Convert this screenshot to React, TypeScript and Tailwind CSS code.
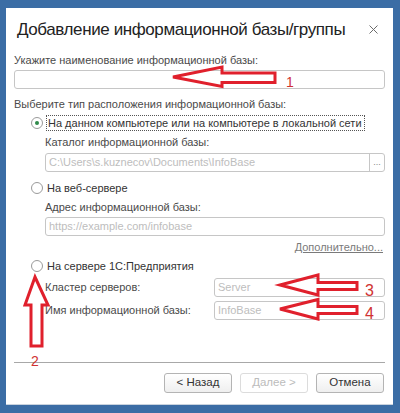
import React from "react";

const font = { fontFamily: '"Liberation Sans", Arial, sans-serif' };

function Radio({ checked }: { checked?: boolean }) {
  return (
    <span className="w-[12px] h-[12px] rounded-full border border-[#9a9a9a] bg-white flex items-center justify-center shrink-0">
      {checked && <span className="w-[4px] h-[4px] rounded-full bg-[#2f8a4a]" />}
    </span>
  );
}

export default function App() {
  return (
    <div className="relative w-[400px] h-[413px] bg-[#3b6da5] overflow-hidden" style={font}>
      <div className="relative ml-[6px] pt-[8px]">
        <div className="w-[387px] h-[397px] bg-white flex flex-col border-b border-[#c9d3de]">
          {/* Title */}
          <div className="h-[42px] flex items-center justify-between pl-[11px] pr-[15px]">
            <span className="text-[17px] text-[#222] leading-none tracking-[-0.4px] whitespace-nowrap">
              Добавление информационной базы/группы
            </span>
            <svg width="9" height="9" viewBox="0 0 9 9">
              <path d="M0.5 0.5 L8.5 8.5 M8.5 0.5 L0.5 8.5" stroke="#6b6b6b" strokeWidth="1" />
            </svg>
          </div>
          <div className="flex flex-col px-[8px] flex-1 text-[11px] text-[#4a4a4a] whitespace-nowrap">
            <div className="mt-[2px] h-[16px] flex items-center">Укажите наименование информационной базы:</div>
            <div className="mt-[2px] h-[19px] border border-[#c6c6c6] rounded-[3px]" />
            <div className="mt-[7px] h-[16px] flex items-center">Выберите тип расположения информационной базы:</div>
            <div className="mt-[3px] h-[16px] flex items-center pl-[17px]">
              <Radio checked />
              <span className="ml-[3px] h-[16px] flex items-center border border-dotted border-[#555] pl-[1px] pr-[2px] text-[#333]">
                На данном компьютере или на компьютере в локальной сети
              </span>
            </div>
            <div className="mt-[3px] h-[16px] flex items-center pl-[31px]">Каталог информационной базы:</div>
            <div className="mt-[3px] ml-[31px] h-[19px] flex border border-[#c6c6c6] rounded-[3px]">
              <div className="flex-1 flex items-center pl-[3px] text-[#bdbdbd]">C:\Users\s.kuznecov\Documents\InfoBase</div>
              <div className="w-[15px] border-l border-[#c6c6c6] flex items-end justify-center pb-[4px] text-[9px] leading-none text-[#888]">...</div>
            </div>
            <div className="mt-[8px] h-[16px] flex items-center pl-[17px]">
              <Radio />
              <span className="ml-[4px] text-[#333]">На веб-сервере</span>
            </div>
            <div className="mt-[3px] h-[16px] flex items-center pl-[31px]">Адрес информационной базы:</div>
            <div className="mt-[2px] ml-[31px] h-[19px] flex items-center pl-[3px] border border-[#c6c6c6] rounded-[3px] text-[#bdbdbd]">
              https://example.com/infobase
            </div>
            <div className="mt-[3px] h-[16px] flex items-center justify-end pr-[2px]">
              <span className="underline text-[#7a7a7a]">Дополнительно...</span>
            </div>
            <div className="mt-[3px] h-[16px] flex items-center pl-[17px]">
              <Radio />
              <span className="ml-[4px] text-[#333]">На сервере 1С:Предприятия</span>
            </div>
            <div className="mt-[4px] h-[19px] flex items-center pl-[31px]">
              <span className="flex-1">Кластер серверов:</span>
              <div className="w-[171px] h-[19px] flex items-center pl-[3px] border border-[#c6c6c6] rounded-[3px] text-[#bdbdbd]">Server</div>
            </div>
            <div className="mt-[4px] h-[19px] flex items-center pl-[31px]">
              <span className="flex-1">Имя информационной базы:</span>
              <div className="w-[171px] h-[19px] flex items-center pl-[3px] border border-[#c6c6c6] rounded-[3px] text-[#bdbdbd]">InfoBase</div>
            </div>
            <div className="flex-1" />
            <div className="h-[1px] bg-[#a8a8a8]" />
            <div className="mt-[10px] mb-[11px] h-[20px] flex justify-end gap-[8px] pr-[1px] text-[11.5px]">
              <div className="w-[68px] h-[20px] flex items-center justify-center border border-[#b4b4b4] rounded-[3px] bg-gradient-to-b from-white to-[#efefef] text-[#333]">&lt; Назад</div>
              <div className="w-[68px] h-[20px] flex items-center justify-center border border-[#dcdcdc] rounded-[3px] bg-white text-[#bcbcbc]">Далее &gt;</div>
              <div className="w-[68px] h-[20px] flex items-center justify-center border border-[#b4b4b4] rounded-[3px] bg-gradient-to-b from-white to-[#efefef] text-[#333]">Отмена</div>
            </div>
          </div>
        </div>
      </div>
      {/* Annotation arrows */}
      <svg className="absolute left-0 top-0 pointer-events-none" width="400" height="413" viewBox="0 0 400 413">
        <g fill="none" stroke="#e0202c" strokeWidth="3" strokeLinejoin="miter">
          <polygon points="173,77 222,67 222,73 275,73 275,82.5 222,82.5 222,86.5" />
          <polygon points="35,277 48,305 42,305 42,346 31,346 31,305 25,305" />
          <polygon points="280,285 318,275 318,282.5 357,282.5 357,289.5 318,289.5 318,295" />
          <polygon points="280,309 318,299.5 318,306.5 357,306.5 357,313.5 318,313.5 318,319" />
        </g>
        <g fill="#d03232" style={font}>
          <text x="286" y="87" fontSize="14">1</text>
          <text x="31" y="366" fontSize="14">2</text>
          <text x="365" y="296" fontSize="16">3</text>
          <text x="365" y="319" fontSize="16">4</text>
        </g>
      </svg>
    </div>
  );
}
